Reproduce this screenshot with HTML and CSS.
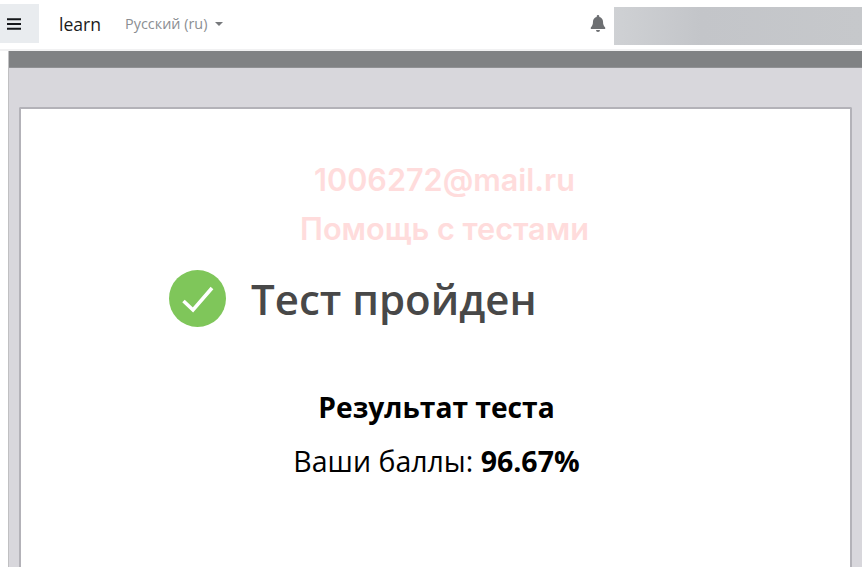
FILE: index.html
```html
<!DOCTYPE html>
<html lang="ru">
<head>
<meta charset="utf-8">
<title>Тест пройден</title>
<link rel="stylesheet" href="styles.css">
</head>
<body>
<header class="navbar">
  <button class="toggle" aria-label="Меню">
    <svg width="14" height="12" viewBox="0 0 14 12"><path d="M0 1.2h14M0 6h14M0 10.8h14" stroke="#15171a" stroke-width="2"/></svg>
  </button>
  <span class="brand">learn</span>
  <span class="lang">Русский ‎(ru)‎<i class="caret"></i></span>
  <svg class="bell" width="16" height="17" viewBox="0 0 16 17"><path fill="#6d6f72" d="M8 0c-.8 0-1.300.6-1.300 1.300v.6C4.400 2.400 3 4.200 3 6.600c0 3.600-1 4.700-2.200 6V14h14.400v-1.400C14 11.300 13 10.200 13 6.600c0-2.400-1.400-4.200-3.700-4.700v-.6C9.300.6 8.800 0 8 0zM6 15a2 2 0 0 0 4 0z"/></svg>
  <div class="user"></div>
</header>
<main class="page">
  <div class="topbar"></div>
  <div class="panel">
    <section class="card">
      <div class="watermark">
        <p class="wm-mail">1006272@mail.ru</p>
        <p class="wm-help">Помощь с тестами</p>
      </div>
      <div class="status">
        <svg class="check" width="57" height="57" viewBox="0 0 57 57"><circle cx="28.500" cy="28.500" r="28.500" fill="#7fc65a"/><path d="M14.500 31l9.500 9 19-22" fill="none" stroke="#fff" stroke-width="3.600"/></svg>
        <h1 class="status-title">Тест пройден</h1>
      </div>
      <h2 class="result-title">Результат теста</h2>
      <p class="score">Ваши баллы: <b>96.67%</b></p>
    </section>
  </div>
</main>
</body>
</html>
```
FILE: styles.css
```css
* { box-sizing: border-box; }
html, body { margin: 0; height: 567px; overflow: hidden; background: #fff; }
body { font-family: "Open Sans", sans-serif; color: #000; }

.navbar { height: 51px; display: flex; align-items: flex-start; border-bottom: 2px solid #f1f1f2; }
.toggle { width: 39px; height: 39px; margin-top: 4px; padding: 0 11px 0 0; border: 0; background: #e9ecef; display: flex; align-items: center; justify-content: center; }
.brand { margin: 12px 0 0 20px; font-size: 17.600px; line-height: 24px; color: #1b1b1b; }
.lang { margin: 14px 0 0 24px; font-size: 14.400px; line-height: 19px; color: #8b8e92; display: flex; align-items: center; }
.caret { margin-left: 8px; border: 4px solid transparent; border-top-color: #77797c; border-bottom: 0; }
.bell { margin: 15px 8px 0 auto; flex: none; }
.user { width: 248px; height: 38px; margin: 7px 0 0 0; background: linear-gradient(90deg, #cfd1d4, #c3c5c9 35%, #c6c8cb); }

.page { margin-left: 8px; height: 516px; display: flex; flex-direction: column; border-left: 1px solid #c0c0c2; }
.topbar { height: 17px; background: #808284; flex: none; border-bottom: 1px solid #909194; }
.panel { flex: 1; background: #d8d7dc; padding: 39px 10px 0 10px; }
.card { height: 460px; background: #fff; border: 2px solid #b3b2b8; border-bottom: 0; border-radius: 2px 2px 0 0; padding-top: 52px; }

.watermark { text-align: center; font-family: Inter, sans-serif; font-weight: 600; color: #ffdcdc; }
.watermark p { margin: 0; }
.wm-mail { font-size: 30.600px; line-height: 38px; padding-left: 18px; }
.wm-help { font-size: 30.700px; line-height: 38px; margin-top: 11px !important; padding-left: 18px; }

.status { display: flex; align-items: center; margin: 22px 0 0 148px; }
.check { flex: none; }
.status-title { margin: 0 0 0 25px; font-size: 42px; line-height: 54px; font-weight: 600; color: #484848; }

.result-title { margin: 62px 0 0; padding-left: 2px; font-size: 28.200px; line-height: 36px; font-weight: 700; text-align: center; }
.score { margin: 18px 0 0; padding-left: 2px; font-size: 28.500px; line-height: 36px; text-align: center; }
.score b { font-weight: 700; }
```
